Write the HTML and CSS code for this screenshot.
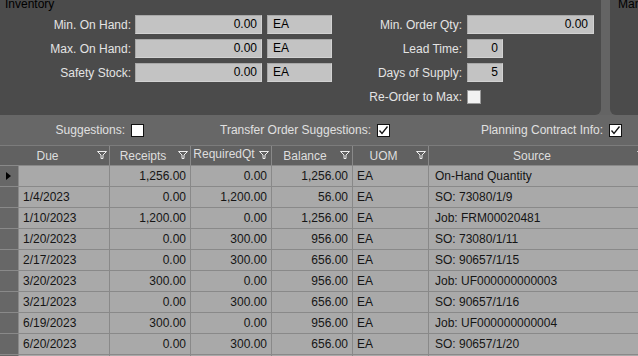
FILE: index.html
```html
<!DOCTYPE html>
<html lang="en">
<head>
  <meta charset="UTF-8">
  <title>Inventory Planning</title>
  <link rel="stylesheet" href="styles.css">
</head>
<body>
  <div class="top">
    <div class="panel">
      <div class="legend">Inventory</div>
      <div class="fields">
        <label class="lbl">Min. On Hand:</label>
        <div class="box qty">0.00</div>
        <div class="box uom">EA</div>
        <label class="lbl">Min. Order Qty:</label>
        <div class="box wide">0.00</div>

        <label class="lbl">Max. On Hand:</label>
        <div class="box qty">0.00</div>
        <div class="box uom">EA</div>
        <label class="lbl">Lead Time:</label>
        <div class="box small">0</div>

        <label class="lbl">Safety Stock:</label>
        <div class="box qty">0.00</div>
        <div class="box uom">EA</div>
        <label class="lbl">Days of Supply:</label>
        <div class="box small">5</div>

        <div></div><div></div><div></div>
        <label class="lbl">Re-Order to Max:</label>
        <div class="cell-check"><span class="chk light"></span></div>
      </div>
    </div>
    <div class="panel side">
      <div class="legend">Man</div>
    </div>
  </div>

  <div class="options">
    <span class="opt opt-sugg">Suggestions:</span>
    <span class="chk"></span>
    <span class="opt opt-transfer">Transfer Order Suggestions:</span>
    <span class="chk"><svg width="11" height="11" viewBox="0 0 11 11"><path d="M1.5 5.5 L4 8.5 L9.5 1.5" fill="none" stroke="#111" stroke-width="1.3"/></svg></span>
    <span class="opt opt-contract">Planning Contract Info:</span>
    <span class="chk"><svg width="11" height="11" viewBox="0 0 11 11"><path d="M1.5 5.5 L4 8.5 L9.5 1.5" fill="none" stroke="#111" stroke-width="1.3"/></svg></span>
  </div>

  <div class="grid">
    <div class="hd span2"><span class="hd-text">Due</span><svg class="funnel" width="10" height="8" viewBox="0 0 10 8"><path d="M0.5 0.5 H9.5 L6 4 V7.5 H4 V4 Z" fill="none" stroke="#eee"/></svg></div>
    <div class="hd"><span class="hd-text">Receipts</span><svg class="funnel" width="10" height="8" viewBox="0 0 10 8"><path d="M0.5 0.5 H9.5 L6 4 V7.5 H4 V4 Z" fill="none" stroke="#eee"/></svg></div>
    <div class="hd"><span class="hd-text up">RequiredQt</span><svg class="funnel" width="10" height="8" viewBox="0 0 10 8"><path d="M0.5 0.5 H9.5 L6 4 V7.5 H4 V4 Z" fill="none" stroke="#eee"/></svg></div>
    <div class="hd"><span class="hd-text">Balance</span><svg class="funnel" width="10" height="8" viewBox="0 0 10 8"><path d="M0.5 0.5 H9.5 L6 4 V7.5 H4 V4 Z" fill="none" stroke="#eee"/></svg></div>
    <div class="hd"><span class="hd-text">UOM</span><svg class="funnel" width="10" height="8" viewBox="0 0 10 8"><path d="M0.5 0.5 H9.5 L6 4 V7.5 H4 V4 Z" fill="none" stroke="#eee"/></svg></div>
    <div class="hd"><span class="hd-text">Source</span><svg class="funnel" width="10" height="8" viewBox="0 0 10 8"><path d="M0.5 0.5 H9.5 L6 4 V7.5 H4 V4 Z" fill="none" stroke="#eee"/></svg></div>

    <div class="sel"><span class="arrow"></span></div>
    <div class="c"></div><div class="c n">1,256.00</div><div class="c n">0.00</div><div class="c n">1,256.00</div><div class="c">EA</div><div class="c src">On-Hand Quantity</div>

    <div class="sel"></div>
    <div class="c">1/4/2023</div><div class="c n">0.00</div><div class="c n">1,200.00</div><div class="c n">56.00</div><div class="c">EA</div><div class="c src">SO: 73080/1/9</div>

    <div class="sel"></div>
    <div class="c">1/10/2023</div><div class="c n">1,200.00</div><div class="c n">0.00</div><div class="c n">1,256.00</div><div class="c">EA</div><div class="c src">Job: FRM00020481</div>

    <div class="sel"></div>
    <div class="c">1/20/2023</div><div class="c n">0.00</div><div class="c n">300.00</div><div class="c n">956.00</div><div class="c">EA</div><div class="c src">SO: 73080/1/11</div>

    <div class="sel"></div>
    <div class="c">2/17/2023</div><div class="c n">0.00</div><div class="c n">300.00</div><div class="c n">656.00</div><div class="c">EA</div><div class="c src">SO: 90657/1/15</div>

    <div class="sel"></div>
    <div class="c">3/20/2023</div><div class="c n">300.00</div><div class="c n">0.00</div><div class="c n">956.00</div><div class="c">EA</div><div class="c src">Job: UF000000000003</div>

    <div class="sel"></div>
    <div class="c">3/21/2023</div><div class="c n">0.00</div><div class="c n">300.00</div><div class="c n">656.00</div><div class="c">EA</div><div class="c src">SO: 90657/1/16</div>

    <div class="sel"></div>
    <div class="c">6/19/2023</div><div class="c n">300.00</div><div class="c n">0.00</div><div class="c n">956.00</div><div class="c">EA</div><div class="c src">Job: UF000000000004</div>

    <div class="sel"></div>
    <div class="c">6/20/2023</div><div class="c n">0.00</div><div class="c n">300.00</div><div class="c n">656.00</div><div class="c">EA</div><div class="c src">SO: 90657/1/20</div>

    <div class="sel"></div>
    <div class="c"></div><div class="c"></div><div class="c"></div><div class="c"></div><div class="c"></div><div class="c"></div>
  </div>
</body>
</html>
```

FILE: styles.css
```css
html, body {
  margin: 0;
  padding: 0;
  height: 100%;
  overflow: hidden;
}

body {
  font-family: 'Liberation Sans', Arial, sans-serif;
  font-size: 12px;
  background-color: #646464;
  color: #e4e4e4;
}

.top {
  display: flex;
  gap: 9px;
  height: 115px;
}

.panel {
  width: 601px;
  background: #4b4b4b;
  border-radius: 0 0 6px 0;
  overflow: hidden;
  flex-shrink: 0;
}

.panel.side {
  flex: 1;
  width: auto;
  border-radius: 0 0 0 6px;
}

.legend {
  color: #000;
  line-height: 14px;
  margin-top: -3px;
  padding-left: 5px;
}

.panel.side .legend {
  padding-left: 8px;
}

.fields {
  display: grid;
  grid-template-columns: 131px 130px 70px 131px 131px;
  grid-auto-rows: 19px;
  row-gap: 5px;
  margin-top: 4px;
  align-items: center;
}

.lbl {
  text-align: right;
  white-space: nowrap;
}

.box {
  height: 19px;
  box-sizing: border-box;
  background: #c3c3c3;
  border: 1px solid #d2d2d2;
  border-top-color: #a8a8a8;
  border-left-color: #a8a8a8;
  color: #000;
  line-height: 17px;
}

.qty {
  margin-left: 4px;
  width: 127px;
  text-align: right;
  padding-right: 4px;
}

.uom {
  margin-left: 6px;
  width: 65px;
  padding-left: 5px;
}

.wide {
  margin-left: 5px;
  width: 127px;
  text-align: right;
  padding-right: 5px;
}

.small {
  margin-left: 5px;
  width: 36px;
  text-align: right;
  padding-right: 4px;
}

.cell-check {
  padding-left: 5px;
  display: flex;
  align-items: center;
}

.chk {
  display: inline-flex;
  align-items: center;
  justify-content: center;
  width: 13px;
  height: 13px;
  box-sizing: border-box;
  background: #fff;
  border: 1px solid #111;
  flex-shrink: 0;
}

.chk.light {
  width: 14px;
  height: 14px;
  background: #f2f2f2;
  border-color: #9a9a9a;
}

.options {
  display: flex;
  align-items: center;
  height: 30px;
  background: #676767;
  border-bottom: 1px solid #7c7c7c;
  white-space: nowrap;
}

.opt {
  color: #e0e0e0;
  margin-right: 6px;
  text-align: right;
  flex-shrink: 0;
}

.opt-sugg {
  margin-left: 55px;
  width: 70px;
}

.opt-transfer {
  margin-left: 73px;
  width: 154px;
}

.opt-contract {
  margin-left: 87px;
  width: 126px;
}

.grid {
  display: grid;
  grid-template-columns: 18px 90px 80px 80px 80px 75px 220px;
  grid-template-rows: 19px;
  grid-auto-rows: 20px;
  gap: 1px;
  background: #898989;
  padding-bottom: 1px;
}

.hd {
  display: flex;
  align-items: center;
  background: #616161;
  color: #dedede;
}

.span2 {
  grid-column: span 2;
}

.hd-text {
  flex: 1;
  text-align: center;
  white-space: nowrap;
}

.hd-text.up {
  margin-top: -3px;
}

.funnel {
  margin: 0 2px 0 2px;
  position: relative;
  top: -1px;
}

.sel {
  background: #676767;
  display: flex;
  align-items: center;
  justify-content: center;
}

.arrow {
  width: 0;
  height: 0;
  border-top: 4.5px solid transparent;
  border-bottom: 4.5px solid transparent;
  border-left: 5px solid #000;
  margin-left: -2px;
}

.c {
  background: #a9a9a9;
  color: #151515;
  line-height: 20px;
  padding: 0 4px;
  white-space: nowrap;
  overflow: hidden;
}

.c.n {
  text-align: right;
}

.c.src {
  padding-left: 6px;
}
```
